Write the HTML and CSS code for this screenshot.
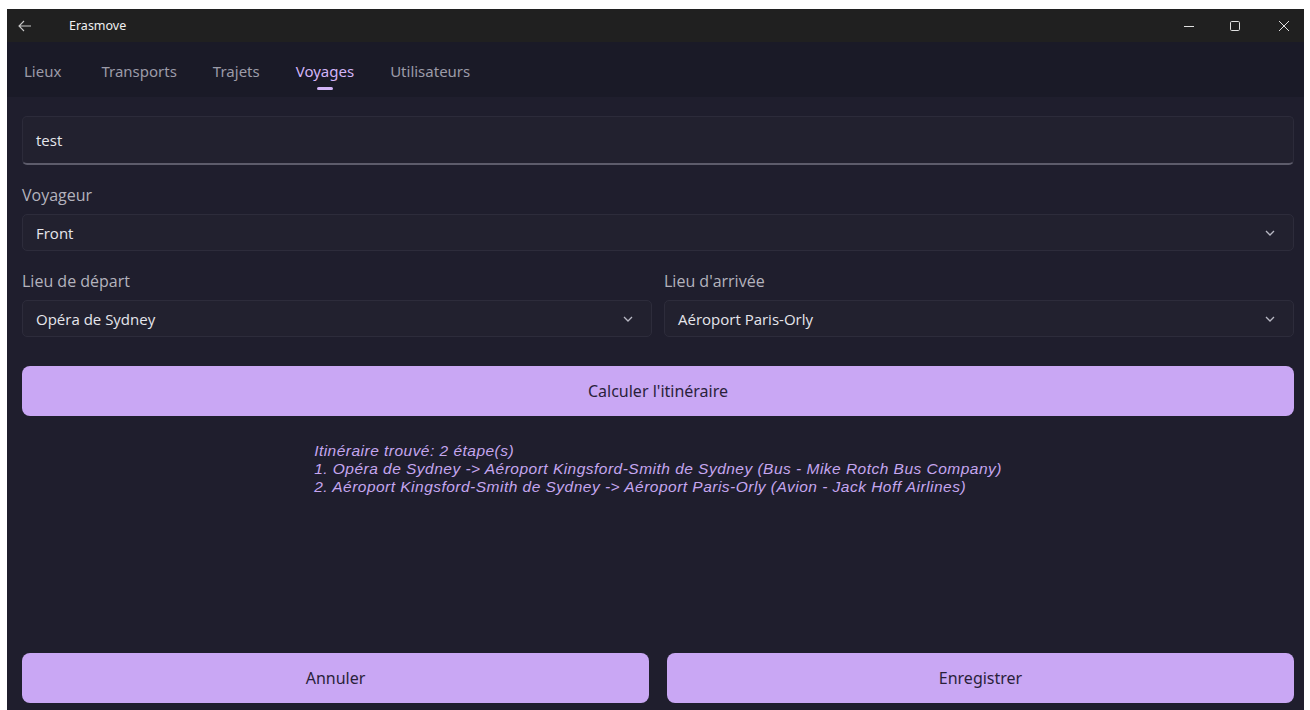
FILE: index.html
```html
<!DOCTYPE html>
<html lang="fr">
<head>
<meta charset="utf-8">
<title>Erasmove</title>
<link rel="stylesheet" href="styles.css">
</head>
<body>
<div class="window">
  <header class="titlebar">
    <div class="title-left">
      <svg class="back" width="14" height="12" viewBox="0 0 14 12"><path d="M13 6H1.5M6 1L1 6l5 5" fill="none" stroke="#c8c8c8" stroke-width="1.1"/></svg>
      <span class="app-name">Erasmove</span>
    </div>
    <div class="controls">
      <span class="ctrl"><svg width="12" height="12" viewBox="0 0 12 12"><path d="M1 6.5h10" stroke="#e0e0e0" stroke-width="1"/></svg></span>
      <span class="ctrl"><svg width="12" height="12" viewBox="0 0 12 12"><rect x="1.5" y="1.5" width="9" height="9" rx="1.2" fill="none" stroke="#e0e0e0" stroke-width="1"/></svg></span>
      <span class="ctrl ctrl-close"><svg width="12" height="12" viewBox="0 0 12 12"><path d="M1 1l10 10M11 1L1 11" stroke="#e0e0e0" stroke-width="1"/></svg></span>
    </div>
  </header>

  <nav class="tabs">
    <span class="tab">Lieux</span>
    <span class="tab">Transports</span>
    <span class="tab">Trajets</span>
    <span class="tab active">Voyages</span>
    <span class="tab">Utilisateurs</span>
  </nav>

  <main class="content">
    <div class="textfield">test</div>

    <div class="label">Voyageur</div>
    <div class="select">
      <span>Front</span>
      <svg class="chev" width="10" height="6" viewBox="0 0 10 6"><path d="M1 1l4 4 4-4" fill="none" stroke="#b8b8c4" stroke-width="1.3"/></svg>
    </div>

    <div class="row">
      <div class="col">
        <div class="label">Lieu de départ</div>
        <div class="select">
          <span>Opéra de Sydney</span>
          <svg class="chev" width="10" height="6" viewBox="0 0 10 6"><path d="M1 1l4 4 4-4" fill="none" stroke="#b8b8c4" stroke-width="1.3"/></svg>
        </div>
      </div>
      <div class="col">
        <div class="label">Lieu d'arrivée</div>
        <div class="select">
          <span>Aéroport Paris-Orly</span>
          <svg class="chev" width="10" height="6" viewBox="0 0 10 6"><path d="M1 1l4 4 4-4" fill="none" stroke="#b8b8c4" stroke-width="1.3"/></svg>
        </div>
      </div>
    </div>

    <button class="btn btn-wide">Calculer l'itinéraire</button>

    <div class="result-wrap">
      <div class="result">
        <div class="result-line">Itinéraire trouvé: 2 étape(s)</div>
        <div class="result-line">1. Opéra de Sydney -&gt; Aéroport Kingsford-Smith de Sydney (Bus - Mike Rotch Bus Company)</div>
        <div class="result-line">2. Aéroport Kingsford-Smith de Sydney -&gt; Aéroport Paris-Orly (Avion - Jack Hoff Airlines)</div>
      </div>
    </div>

    <div class="actions">
      <button class="btn">Annuler</button>
      <button class="btn">Enregistrer</button>
    </div>
  </main>
</div>
</body>
</html>
```

FILE: styles.css
```css
html, body {
  margin: 0;
  height: 100%;
  background: #ffffff;
}

body {
  padding: 9px 6px 0 7px;
  box-sizing: border-box;
  font-family: "Open Sans", "Noto Sans", sans-serif;
}

.window {
  height: 701px;
  display: flex;
  flex-direction: column;
  background: #1f1e2d;
  overflow: hidden;
}

/* title bar */
.titlebar {
  height: 33px;
  background: #202020;
  display: flex;
  align-items: center;
  justify-content: space-between;
  flex-shrink: 0;
}

.title-left {
  display: flex;
  align-items: center;
}

.back {
  margin-left: 11px;
}

.app-name {
  margin-left: 37px;
  color: #f0f0f0;
  font-size: 12.5px;
  font-family: "Noto Sans", sans-serif;
}

.controls {
  display: flex;
  height: 100%;
}

.ctrl {
  width: 46px;
  height: 100%;
  display: flex;
  align-items: center;
  justify-content: center;
}

.ctrl-close {
  justify-content: flex-end;
  padding-right: 14px;
  box-sizing: border-box;
}

/* tab strip */
.tabs {
  height: 55px;
  background: #1a1a27;
  display: flex;
  align-items: center;
  padding-left: 17px;
  padding-top: 2px;
  box-sizing: border-box;
  flex-shrink: 0;
}

.tab {
  position: relative;
  color: #9c9ba8;
  font-size: 15px;
  font-family: "Noto Sans", sans-serif;
  margin-right: 36px;
}

.tab:first-child {
  margin-right: 40px;
}

.tab.active {
  color: #d2b4f7;
}

.tab.active::after {
  content: "";
  position: absolute;
  left: 50%;
  bottom: -9px;
  width: 16px;
  height: 3px;
  margin-left: -8px;
  border-radius: 2px;
  background: #d2b4f7;
}

/* main form */
.content {
  flex: 1;
  display: flex;
  flex-direction: column;
  padding: 19px 10px 7px 15px;
}

.textfield {
  height: 49px;
  box-sizing: border-box;
  border: 1px solid #2c2b3a;
  border-bottom: 2px solid #5d5c6b;
  border-radius: 5px;
  background: #22212f;
  color: #e6e6ec;
  font-size: 15px;
  padding: 0 13px;
  display: flex;
  align-items: center;
}

.label {
  color: #b4b3bd;
  font-size: 16px;
  line-height: 20px;
  margin-top: 20px;
  margin-bottom: 9px;
}

.select {
  height: 37px;
  box-sizing: border-box;
  border: 1px solid #2d2c3b;
  border-radius: 5px;
  background: #22212f;
  color: #e6e6ec;
  font-size: 15px;
  display: flex;
  align-items: center;
  justify-content: space-between;
  padding: 0 18px 0 13px;
}

.chev {
  flex-shrink: 0;
}

.row {
  display: flex;
  gap: 12px;
}

.col {
  flex: 1;
}

.btn {
  border: none;
  border-radius: 8px;
  background: #c9a7f4;
  color: #2a1f3b;
  font-family: "Noto Sans", sans-serif;
  font-size: 16px;
  height: 50px;
  cursor: pointer;
}

.btn-wide {
  width: 100%;
  margin-top: 29px;
}

.result-wrap {
  display: flex;
  justify-content: center;
  margin-top: 26px;
}

.result {
  color: #c5a6ef;
  font-family: "Liberation Sans", "Noto Sans", sans-serif;
  font-style: italic;
  font-size: 15.5px;
  letter-spacing: 0.48px;
  text-align: left;
}

.result-line {
  height: 18px;
  line-height: 18px;
  white-space: nowrap;
}

.actions {
  margin-top: auto;
  display: flex;
  gap: 18px;
}

.actions .btn {
  flex: 1;
}
```
